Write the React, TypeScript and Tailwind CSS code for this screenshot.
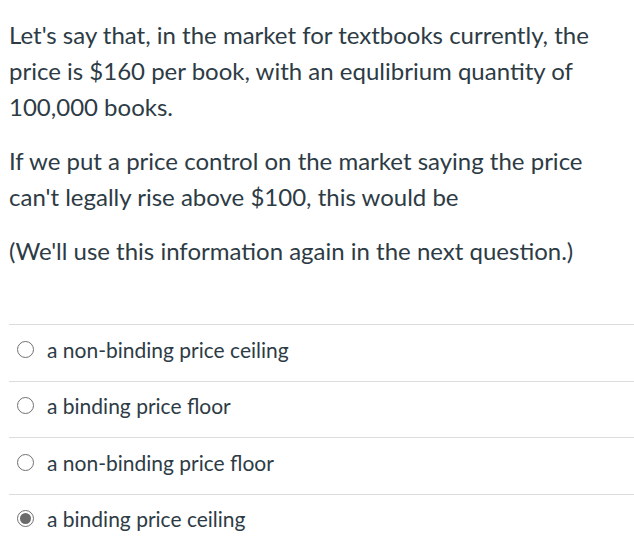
const answers = [
  { label: "a non-binding price ceiling", checked: false },
  { label: "a binding price floor", checked: false },
  { label: "a non-binding price floor", checked: false },
  { label: "a binding price ceiling", checked: true },
];

function Radio({ checked }: { checked: boolean }) {
  return (
    <span className="flex h-[17px] w-[17px] shrink-0 items-center justify-center rounded-full border border-[#717171] bg-white">
      {checked && <span className="h-[11px] w-[11px] rounded-full bg-[#6b6b6b]" />}
    </span>
  );
}

export default function App() {
  return (
    <div className="min-h-screen bg-white font-['Lato','Noto_Sans',sans-serif] text-[#2d3b45]">
      <div className="pl-[9px] pr-2 pt-[17px] text-[24px] leading-[36px]">
        <p>
          Let's say that, in the market for textbooks currently, the price is $160 per book, with an
          equlibrium quantity of 100,000 books.
        </p>
        <p className="mt-[18px]">
          If we put a price control on the market saying the price can't legally rise above $100,
          this would be
        </p>
        <p className="mt-[18px]">(We'll use this information again in the next question.)</p>
      </div>

      <div className="ml-[9px] mt-[55px]">
        {answers.map((a) => (
          <label
            key={a.label}
            className="flex h-[56.5px] items-center gap-[13px] border-t border-[#dcdcdc] pb-[7px] pl-[8px] text-[21px]"
          >
            <Radio checked={a.checked} />
            <span>{a.label}</span>
          </label>
        ))}
      </div>
    </div>
  );
}
